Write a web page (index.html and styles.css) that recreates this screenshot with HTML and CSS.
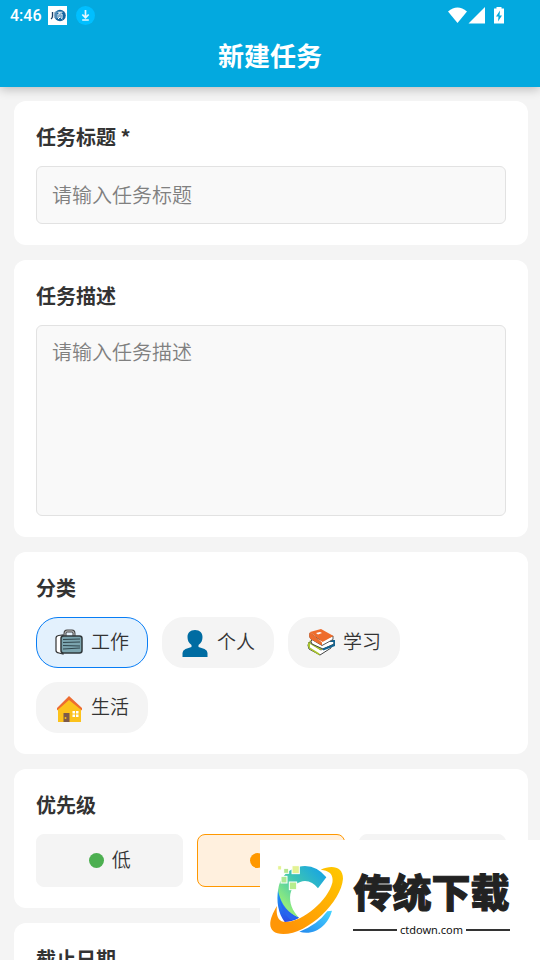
FILE: index.html
```html
<!DOCTYPE html>
<html lang="zh-CN">
<head>
    <meta charset="UTF-8">
    <meta name="viewport" content="width=device-width, initial-scale=1.0">
    <title>新建任务</title>
    <link rel="stylesheet" href="styles.css">
</head>
<body>

    <header class="header">
        <div class="status-bar">
            <span class="time">4:46</span>
            <svg class="app-icon" viewBox="0 0 19 19" aria-hidden="true">
                <rect width="19" height="19" fill="#fff"/>
                <circle cx="12" cy="9.500" r="5.800" fill="#1565a0"/>
                <path d="M4.500 6v4q0 2-1.500 3" fill="none" stroke="#1c3f66" stroke-width="1.300"/>
                <path d="M6.300 6v6M8 5.500v7" fill="none" stroke="#8fb0cc" stroke-width="1"/>
                <path d="M9.500 6.200h5M12 6.200l-.5 1.600M10 12V8h4v4M12 9v2l-2 2M12.500 11.500l2 1.500" fill="none" stroke="#fff" stroke-width="1"/>
            </svg>
            <svg class="download-icon" viewBox="0 0 19 19" aria-hidden="true">
                <circle cx="9.500" cy="9.500" r="9.500" fill="#00bfff"/>
                <path d="M9.500 4v7.500M6.300 8.500l3.200 3.200 3.200-3.200M6.200 14h6.600" fill="none" stroke="#e4f7ff" stroke-width="1.700"/>
            </svg>
            <svg class="signal-icons" viewBox="0 0 58 18" aria-hidden="true">
                <path d="M0 4.500Q9.500-3.500 19 4.500L9.500 16z" fill="#fff"/>
                <path d="M37 0v16.500H20.500z" fill="#fff"/>
                <path d="M46 1.500h2.500V0h5v1.500H56v15H46z" fill="#fff"/>
                <path d="M52 3.500l-4 6h2.500l-.5 5 4-6h-2.500z" fill="#03a9df"/>
            </svg>
        </div>
        <h1>新建任务</h1>
    </header>

    <main class="content">
        <form class="task-form">
            <div class="card">
                <label class="card-title" for="titulo">任务标题 *</label>
                <input class="field" type="text" id="titulo" placeholder="请输入任务标题">
            </div>

            <div class="card">
                <label class="card-title" for="descripcion">任务描述</label>
                <textarea class="field field-area" id="descripcion" placeholder="请输入任务描述"></textarea>
            </div>

            <fieldset class="card">
                <legend class="card-title">分类</legend>
                <div class="chips">
                    <label class="chip">
                        <input type="radio" name="category" value="work" checked>
                        <svg viewBox="0 0 28 28" aria-hidden="true">
                            <path d="M10 7V4.500Q10 2 12 2h5q2 0 2 2.500V7" fill="none" stroke="#444" stroke-width="3"/>
                            <path d="M10 7V4.500Q10 2 12 2h5q2 0 2 2.500V7" fill="none" stroke="#c9c9c9" stroke-width="1"/>
                            <path d="M3.500 6.500Q1 7 1 9v12.500q0 2 3 2.500l4 1V6z" fill="#fff" stroke="#333" stroke-width="1.200"/>
                            <rect x="6" y="7" width="21" height="17" rx="2.500" fill="#7ba4ae" stroke="#30383b" stroke-width="1.500"/>
                            <path d="M8 10.500l17-.5M8 13.500l17-.5M8 16.500l17 .5M8 20l17-1" stroke="#30464d" stroke-width="1"/>
                        </svg>
                        <span>工作</span>
                    </label>
                    <label class="chip">
                        <input type="radio" name="category" value="personal">
                        <svg viewBox="0 0 28 28" aria-hidden="true">
                            <path d="M14 1c5 0 7.500 3 7.500 7 0 3-1 6-4 8v2l6 2q3 1.500 3 4v4h-25v-4q0-2.500 3-4l6-2v-2c-3-2-4-5-4-8 0-4 2.500-7 7.500-7z" fill="#006ca2"/>
                        </svg>
                        <span>个人</span>
                    </label>
                    <label class="chip">
                        <input type="radio" name="category" value="study">
                        <svg viewBox="0 0 28 28" aria-hidden="true">
                            <path d="M2 13l12 8 10-6v4L13 26 2 20q-2-4 0-7z" fill="#fff" stroke="#444"/>
                            <path d="M2 12l12 9 9-6-11-7z" fill="#b5cf36"/>
                            <path d="M1.500 13q-1.500 4 1 7l10 6.500v-2L3 18.500V15l10 6v-2z" fill="#a9c62c"/>
                            <path d="M5 10q-2 3 0 5l11 5 11-5v-3l-8-3z" fill="#fff" stroke="#444"/>
                            <path d="M23 12l4.500 0v4L16 20.500" fill="none" stroke="#146490" stroke-width="2"/>
                            <path d="M3 4q-1.500 4 1 6l11 6.500 11-6V7L13 11z" fill="#fff" stroke="#555"/>
                            <path d="M3 3L14 0l12.500 7-11 6z" fill="#ee6c2b"/>
                            <path d="M3 3q-2 4 .5 7L15 16.500v-3z" fill="#ee6c2b"/>
                            <path d="M9 4l4-1 2 1-4 1.500z" fill="#fff"/>
                        </svg>
                        <span>学习</span>
                    </label>
                    <label class="chip">
                        <input type="radio" name="category" value="life">
                        <svg viewBox="0 0 28 28" aria-hidden="true">
                            <path d="M3 28V15L14 4l12 11v13z" fill="#fcc21b"/>
                            <path d="M2 16.500V14L14 2l13 12v2.500L14 6z" fill="#ed6c30"/>
                            <rect x="8.500" y="19" width="6" height="9" fill="#7d5a4b"/>
                            <circle cx="10.500" cy="24" r="1" fill="#fcc21b"/>
                            <path d="M17.500 17h2.500v2.500h-2.500zM21 17h2.500v2.500H21zM17.500 20.500h2.500V23h-2.500zM21 20.500h2.500V23H21z" fill="#fff"/>
                        </svg>
                        <span>生活</span>
                    </label>
                </div>
            </fieldset>

            <fieldset class="card">
                <legend class="card-title">优先级</legend>
                <div class="priorities">
                    <label class="priority low">
                        <input type="radio" name="priority" value="low">
                        <i class="dot"></i>
                        <span>低</span>
                    </label>
                    <label class="priority medium">
                        <input type="radio" name="priority" value="medium" checked>
                        <i class="dot"></i>
                        <span>中</span>
                    </label>
                    <label class="priority high">
                        <input type="radio" name="priority" value="high">
                        <i class="dot"></i>
                        <span>高</span>
                    </label>
                </div>
            </fieldset>

            <div class="card">
                <label class="card-title" for="fecha">截止日期</label>
                <input class="field" type="text" id="fecha">
            </div>
        </form>
    </main>

    <aside class="brand">
        <svg class="brand-logo" viewBox="264 130 234 220" aria-hidden="true">
            <defs>
                <linearGradient id="gC" x1="0" y1="1" x2="1" y2="0">
                    <stop offset="0.200" stop-color="#91ec7c"/>
                    <stop offset="0.550" stop-color="#3cc4b4"/>
                    <stop offset="1" stop-color="#109dee"/>
                </linearGradient>
                <linearGradient id="gRing" x1="0" y1="1" x2="1" y2="0">
                    <stop offset="0.200" stop-color="#ff9606"/>
                    <stop offset="1" stop-color="#ffc900"/>
                </linearGradient>
                <linearGradient id="gBlue" x1="0" y1="0" x2="0" y2="1">
                    <stop offset="0" stop-color="#18a9f8"/>
                    <stop offset="1" stop-color="#2b4be8"/>
                </linearGradient>
                <linearGradient id="gTail" x1="0" y1="1" x2="1" y2="0">
                    <stop offset="0" stop-color="#2489ee"/>
                    <stop offset="1" stop-color="#45d4ff"/>
                </linearGradient>
            </defs>
            <path d="M295 205C288 245 295 280 314 306Q334 306 357 293C325 278 303 248 295 205z" fill="url(#gBlue)"/>
            <path d="M439 172Q413 139 375 138C325 140 294 177 295 215C303 255 327 280 357 293C337 272 327 248 331 222C337 196 355 184 375 183Q398 184 414 205z" fill="url(#gC)"/>
            <path d="M296 222C303 263 326 284 357 293Q345 300 333 301C311 282 299 253 296 222z" fill="#2864ee"/>
            <path d="M358 335Q412 315 442 274L456 272C445 312 408 349 358 335z" fill="url(#gTail)"/>
            <path d="M422 149C455 134 489 139 489 176C484 244 385 342 310 342C262 341 261 307 291 258C287 287 295 306 317 306C370 305 444 240 457 188C461 163 449 152 422 149z" fill="url(#gRing)"/>
            <g stroke="#fff" stroke-width="3">
                <rect x="293" y="137" width="12" height="13" fill="#e5f394"/>
                <rect x="311" y="145" width="15" height="15" fill="#b4e68d"/>
                <rect x="336" y="137" width="22" height="24" fill="#e3f293"/>
                <rect x="303" y="169" width="18" height="20" fill="#ace994"/>
                <rect x="328" y="186" width="22" height="23" fill="#b7ed8d"/>
            </g>
        </svg>
        <div class="brand-text">
            <strong>传统下载</strong>
            <span class="brand-url">ctdown.com</span>
        </div>
    </aside>

</body>
</html>
```

FILE: styles.css
```css
* {
    box-sizing: border-box;
}

body {
    font-family: "Noto Sans CJK SC", sans-serif;
    background-color: #f4f4f4;
    margin: 0;
    color: #333;
    height: 100vh;
    display: flex;
    flex-direction: column;
    overflow: hidden;
}

.header {
    position: relative;
    background-color: #03a9df;
    color: #fff;
    box-shadow: 0 2px 10px rgba(0, 0, 0, 0.25);
    padding-bottom: 14px;
}

.status-bar {
    display: flex;
    align-items: center;
    height: 31px;
    padding: 0 34px 0 10px;
}

.time {
    font-family: Roboto, sans-serif;
    font-size: 16px;
    font-weight: 500;
    margin-right: 6px;
}

.app-icon,
.download-icon {
    width: 19px;
    height: 19px;
    margin-right: 9px;
}

.signal-icons {
    width: 58px;
    height: 18px;
    margin-left: auto;
}

h1 {
    margin: 0;
    padding-top: 6px;
    font-size: 26px;
    line-height: 36px;
    font-weight: bold;
    text-align: center;
}

.content {
    flex: 1;
    min-height: 0;
    overflow-y: auto;
    scrollbar-width: none;
    padding: 14px 12px 14px 14px;
}

.task-form {
    display: flex;
    flex-direction: column;
    gap: 15px;
}

.card {
    background-color: #fff;
    border: none;
    border-radius: 12px;
    margin: 0;
    padding: 22px 22px 21px;
    min-width: 0;
}

.card-title {
    display: block;
    float: left;
    width: 100%;
    padding: 0;
    margin-bottom: 15px;
    font-size: 20px;
    line-height: 28px;
    font-weight: bold;
}

.field {
    display: block;
    clear: both;
    width: 100%;
    height: 58px;
    padding: 11px 15px 13px;
    border: 1px solid #e2e2e2;
    border-radius: 6px;
    background-color: #f9f9f9;
    color: #333;
    font-family: inherit;
    font-size: 20px;
    line-height: 30px;
}

.field::placeholder {
    color: #808080;
    font-weight: 350;
}

.field-area {
    height: 191px;
    resize: none;
}

.chips {
    clear: both;
    display: flex;
    flex-wrap: wrap;
    gap: 14px;
}

.chip,
.priority {
    position: relative;
    display: flex;
    align-items: center;
    justify-content: center;
    gap: 8px;
    border: 1px solid #f4f4f4;
    background-color: #f4f4f4;
    font-size: 19px;
    line-height: 28px;
    font-weight: 350;
    cursor: pointer;
}

.chip span,
.priority span {
    padding-bottom: 3px;
}

.chip {
    width: 112px;
    height: 51px;
    border-radius: 22px;
}

.chip svg {
    width: 28px;
    height: 28px;
}

.chip input,
.priority input {
    position: absolute;
    inset: 0;
    margin: 0;
    opacity: 0;
}

.chip:has(input:checked) {
    background-color: #e3f1fd;
    border-color: #087df5;
}

.priorities {
    clear: both;
    display: flex;
    gap: 14px;
}

.priority {
    flex: 1;
    height: 53px;
    border-radius: 8px;
}

.dot {
    width: 15px;
    height: 15px;
    border-radius: 50%;
}

.low .dot {
    background-color: #4caf50;
}

.medium .dot {
    background-color: #ff9800;
}

.high .dot {
    background-color: #f44336;
}

.medium:has(input:checked) {
    background-color: #fff0de;
    border-color: #ff9800;
}

.brand {
    position: fixed;
    right: 0;
    bottom: 0;
    display: flex;
    align-items: center;
    gap: 7px;
    width: 280px;
    height: 120px;
    padding: 0 30px 0 8px;
    background-color: #fff;
}

.brand-logo {
    width: 78px;
    height: 74px;
}

.brand-text {
    flex: 1;
    color: #222;
    text-align: center;
}

.brand-text strong {
    display: block;
    padding-bottom: 4px;
    font-size: 39px;
    line-height: 56px;
    font-weight: 900;
    -webkit-text-stroke: 1px #222;
    white-space: nowrap;
}

.brand-url {
    display: flex;
    align-items: center;
    gap: 3px;
    font-family: "Noto Sans", sans-serif;
    font-size: 11px;
    line-height: 16px;
    color: #111;
}

.brand-url::before,
.brand-url::after {
    content: "";
    flex: 1;
    height: 2px;
    background-color: #333;
}
```
